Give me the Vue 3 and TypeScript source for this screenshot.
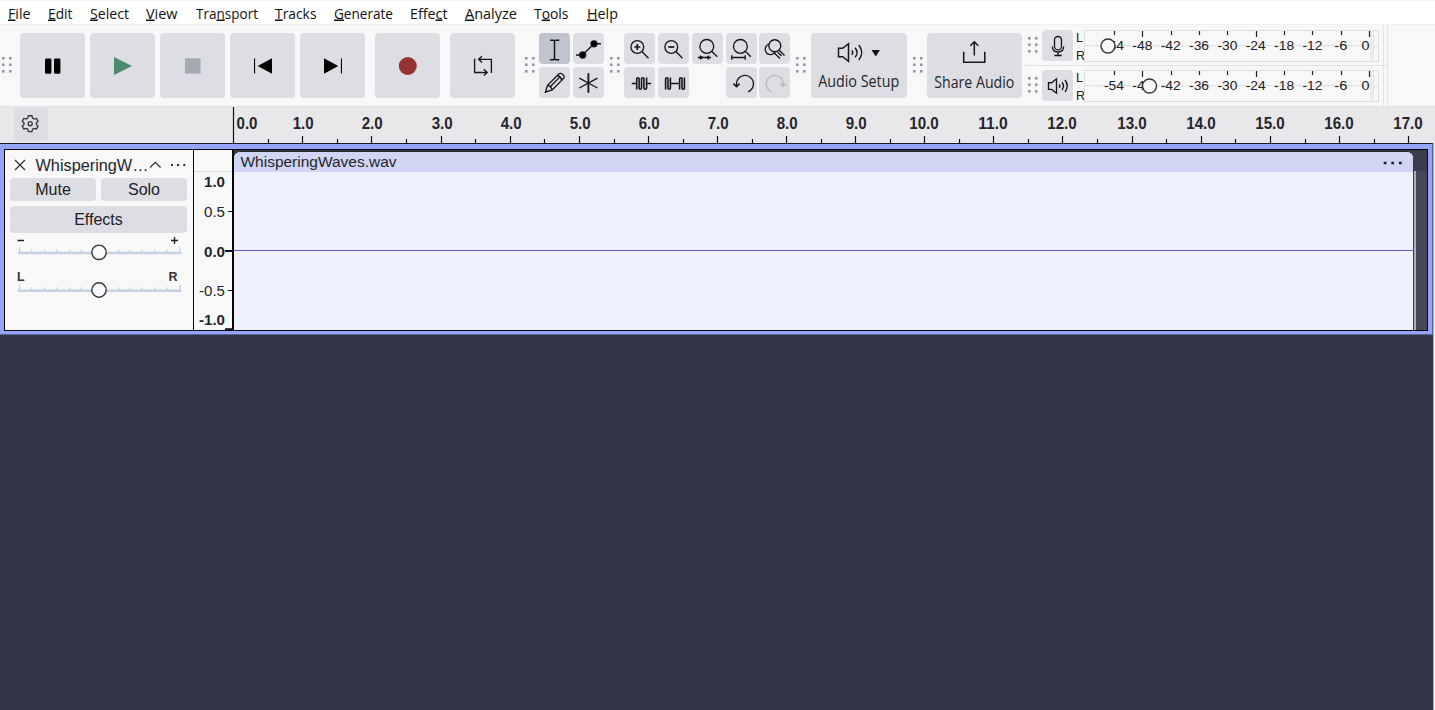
<script setup lang="ts">
interface MenuItem { pre: string; key: string; post: string; width: number; text: number }

const menu: MenuItem[] = [
  { pre: '', key: 'F', post: 'ile', width: 40, text: 22.5 },
  { pre: '', key: 'E', post: 'dit', width: 42, text: 24.5 },
  { pre: '', key: 'S', post: 'elect', width: 56, text: 39 },
  { pre: '', key: 'V', post: 'iew', width: 50, text: 31.5 },
  { pre: 'Tra', key: 'n', post: 'sport', width: 79, text: 62 },
  { pre: '', key: 'T', post: 'racks', width: 59, text: 41.5 },
  { pre: '', key: 'G', post: 'enerate', width: 76, text: 59 },
  { pre: 'Effe', key: 'c', post: 't', width: 55, text: 37.5 },
  { pre: '', key: 'A', post: 'nalyze', width: 69, text: 52 },
  { pre: 'T', key: 'o', post: 'ols', width: 52.5, text: 34.5 },
  { pre: '', key: 'H', post: 'elp', width: 50, text: 31 },
]

const seconds = Array.from({ length: 18 }, (_, i) => ({
  label: i.toFixed(1),
  x: Math.round(233.2 + i * 69.1),
}))
const halves = Array.from({ length: 17 }, (_, i) => Math.round(233.2 + i * 69.1 + 34.8))

const levels = [-54, -48, -42, -36, -30, -24, -18, -12, -6, 0].map((v, i) => ({
  label: String(v),
  tick: v === 0 ? 286 : 31 + i * 28.35,
  x: v === 0 ? 281.5 : 30 + i * 28.35,
  width: v === 0 ? 8 : v === -6 ? 13 : 20,
  tall: v % 24 === 0,
}))

const meters = [
  { name: 'record', knob: 24 },
  { name: 'playback', knob: 65.5 },
]

const gripDots = [0, 1, 2].flatMap((r) => [0, 1].map((c) => ({ x: c * 7, y: r * 6.5 })))
const sliderTicks = [12, 25, 37, 50, 61.5, 99, 110, 122, 135, 147.5]
</script>

<template>
  <div class="app">
    <nav class="menu">
      <svg v-for="m in menu" :key="m.key + m.post" class="menu-item" :width="m.width" height="24">
        <text x="0" y="17.5" :textLength="m.text" lengthAdjust="spacingAndGlyphs">{{ m.pre }}<tspan class="key">{{ m.key }}</tspan>{{ m.post }}</text>
      </svg>
    </nav>

    <header class="toolbar">
      <svg class="grip g1" width="10" height="16"><rect v-for="(d, i) in gripDots" :key="i" :x="d.x" :y="d.y" width="2.6" height="2.6" /></svg>
      <div class="transport">
        <button class="big"><svg width="65" height="65"><rect x="25" y="25.5" width="6.4" height="15.3" rx="1.3" /><rect x="34" y="25.5" width="6.4" height="15.3" rx="1.3" /></svg></button>
        <button class="big"><svg width="65" height="65"><path class="green" d="M24 24L42 33L24 42Z" /></svg></button>
        <button class="big"><svg width="65" height="65"><rect class="gray" x="25" y="25.3" width="15.6" height="15.3" /></svg></button>
        <button class="big"><svg width="65" height="65"><path d="M24 25.5h1.1v15H24ZM27.7 33L42 25.3V40.7Z" /></svg></button>
        <button class="big"><svg width="65" height="65"><path d="M24 25.3L38.3 33L24 40.7ZM40.9 25.5H42v15h-1.1Z" /></svg></button>
        <button class="big gap"><svg width="65" height="65"><circle class="red" cx="32.8" cy="33" r="9" /></svg></button>
        <button class="big gap"><svg class="line" width="65" height="65"><path d="M24.6 25.8V39.5H37M33.8 36.3L37.2 39.5L33.8 42.6M28.7 26.3H41.4V40M32 23.2L28.6 26.3L32 29.5" /></svg></button>
      </div>

      <svg class="grip g2" width="10" height="16"><rect v-for="(d, i) in gripDots" :key="i" :x="d.x" :y="d.y" width="2.6" height="2.6" /></svg>
      <div class="tools">
        <button class="small selected"><svg class="line" width="31" height="31"><path d="M11 7.2h3.3l1.2.7l1.2-.7H20.3M15.5 7.9V26M11 26.7h3.3l1.2-.7l1.2.7H20.3" stroke-width="1.5" /></svg></button>
        <button class="small"><svg class="line" width="31" height="31"><path d="M3 22h6.5L21 10.7h7" /><circle class="solid" cx="9.7" cy="22" r="3" /><circle class="solid" cx="21" cy="10.8" r="3" /></svg></button>
        <button class="small"><svg class="line" width="31" height="31"><path d="M6.4 25.2L8.6 18.3L19.5 7.3Q21.7 5.3 24 7.7T24 12L13.2 22.9ZM8.6 18.3Q12 18.8 13.2 22.9M10.7 20.3L20.5 10.4M18.3 8.5Q21.8 9.4 22.8 13.2" /></svg></button>
        <button class="small"><svg class="line" width="31" height="31"><path d="M15.4 6.2V25.8" stroke-width="1.9" /><path d="M6.3 11.2L24.5 21M24.5 11.2L6.3 21" stroke-width="1.4" /></svg></button>
      </div>

      <svg class="grip g3" width="10" height="16"><rect v-for="(d, i) in gripDots" :key="i" :x="d.x" :y="d.y" width="2.6" height="2.6" /></svg>
      <div class="edit">
        <button class="small"><svg class="line" width="31" height="31"><circle cx="13.3" cy="14" r="6.4" /><path d="M17.9 18.6L24.5 25.2" /><path d="M10.3 14h6M13.3 11v6" stroke-width="1.7" /></svg></button>
        <button class="small"><svg class="line" width="31" height="31"><circle cx="13.3" cy="14" r="6.4" /><path d="M17.9 18.6L24.5 25.2" /><path d="M10.3 14h6" stroke-width="1.7" /></svg></button>
        <button class="small"><svg class="line" width="31" height="31"><circle cx="14.8" cy="13.4" r="6.9" /><path d="M19.7 18.3L25.3 23.8M5.8 24.5H19" /><path class="solid" d="M8 22.6L11.2 24.5L8 26.4ZM17 22.6L13.8 24.5L17 26.4Z" stroke-width=".5" /></svg></button>
        <button class="small"><svg class="line" width="31" height="31"><circle cx="14.4" cy="13.4" r="6.9" /><path d="M19.3 18.3L24.8 23.8M5.8 24.5H19.2M5.8 22.2v4.6M19.2 22.2v4.6" /></svg></button>
        <button class="small"><svg class="line" width="31" height="31"><circle cx="15.8" cy="12.7" r="6" /><path d="M10 11.2A5.3 5.3 0 1 0 16.2 18.6M20 17L25.5 22.5M14.8 19.6L21 25.6M18.8 19.3L22.6 22.9" /></svg></button>
        <button class="small"><svg class="line" width="31" height="31"><path d="M7.7 16.5H12.7M12.7 22.4V11.8Q12.7 10.7 13.9 10.7T15.1 11.8V21Q15.1 22.3 16.3 22.3T17.5 21V11.8Q17.5 10.7 18.7 10.7T19.9 11.8V21Q19.9 22.3 21.1 22.3T22.6 21V10.6M22.6 16.5H27.2" stroke-width="1.6" /></svg></button>
        <button class="small"><svg class="line" width="31" height="31"><path d="M7.6 22.4V11.8Q7.6 10.7 8.8 10.7T10 11.8V21Q10 22.3 11.2 22.3T12.4 21V10.6M12.4 16.5H21.6M21.6 22.4V11.8Q21.6 10.7 22.8 10.7T24 11.8V21Q24 22.3 25.2 22.3T26.4 21V10.6" stroke-width="1.6" /></svg></button>
        <span></span>
        <button class="small"><svg class="line" width="31" height="31"><path d="M10.5 19.2V16.6A8.5 8.5 0 1 1 22 24.8" /><path d="M7.4 16.6L10.5 19.6L13.6 16.6" stroke-width="1.6" /></svg></button>
        <button class="small"><svg class="line faded" width="31" height="31"><path d="M24.2 19.2V16.6A8.5 8.5 0 1 0 12.7 24.8M21.1 16.6L24.2 19.6L27.3 16.6" /></svg></button>
      </div>

      <svg class="grip g4" width="10" height="16"><rect v-for="(d, i) in gripDots" :key="i" :x="d.x" :y="d.y" width="2.6" height="2.6" /></svg>
      <button class="wide setup">
        <svg class="line" width="96" height="65">
          <path d="M27.5 15.3V23.7H31.7L37.5 28.3V10.7L31.7 15.3ZM40.7 17.5Q42.9 19.5 40.7 21.7M44.1 14.8Q48 19.5 44.1 24.3M47.8 12Q53.8 19.5 47.8 27" stroke-width="1.5" />
          <path class="solid" d="M61.7 17.6h6L64.7 22.3Z" />
          <text x="7.2" y="53.5" textLength="81" lengthAdjust="spacingAndGlyphs">Audio Setup</text>
        </svg>
      </button>
      <svg class="grip g5" width="10" height="16"><rect v-for="(d, i) in gripDots" :key="i" :x="d.x" :y="d.y" width="2.6" height="2.6" /></svg>
      <button class="wide share">
        <svg class="line" width="95" height="65">
          <path d="M36.7 18.7V29.2H57.8V18.7M47.3 22.5V8.8M43.3 12.8L47.3 8.8L51.3 12.8" stroke-width="1.5" />
          <text x="7.3" y="54.5" textLength="80" lengthAdjust="spacingAndGlyphs">Share Audio</text>
        </svg>
      </button>

      <div class="meters">
        <div v-for="(m, mi) in meters" :key="m.name" class="meter">
          <svg class="grip" width="10" height="16"><rect v-for="(d, i) in gripDots" :key="i" :x="d.x" :y="d.y" width="2.6" height="2.6" /></svg>
          <button class="small">
            <svg v-if="mi === 0" class="line" width="31" height="31"><rect x="12.5" y="6.5" width="7" height="13.4" rx="3.5" /><path d="M10.4 16.5Q10.4 22 16 22T21.6 16.5M16 22v3.3M12.3 25.5h7.5" /></svg>
            <svg v-else class="line" width="31" height="31"><path d="M6.5 12.7V19.4H9.7L14.5 23.2V8.8L9.7 12.7ZM17.2 14.5Q18.7 16 17.2 17.7M20 12.3Q23 16 20 20M23 10Q27.5 16 23 22" /></svg>
          </button>
          <svg class="channels" width="11" height="32"><text x="1" y="12">L</text><text x="1" y="29.5">R</text></svg>
          <svg class="scale" width="296" height="32">
            <rect class="frame" x=".5" y=".5" width="286.5" height="31" />
            <path class="frame" d="M0 15.7H287M289.2.5H294.5V31.5H289.2ZM289 16.2h5.5" />
            <g v-for="l in levels" :key="l.label">
              <path class="tick" :d="`M${Math.round(l.tick) - 0.5} 1v${l.tall ? 6 : 4}`" />
              <text :x="l.x" y="19.7" text-anchor="middle" :textLength="l.width" lengthAdjust="spacingAndGlyphs">{{ l.label }}</text>
            </g>
            <circle class="knob" :cx="m.knob" cy="16" r="7" />
          </svg>
        </div>
      </div>
      <div class="dock-edge"></div>
    </header>

    <div class="timeline">
      <svg width="1435" height="36">
        <rect class="option" x="14" y="0.5" width="34" height="33.5" rx="4" />
        <g class="gear" transform="translate(30.2 16.7) scale(.88) translate(-30.2 -17.8)">
          <path d="M28.2 9.5h3.9l.8 2.7l1.7 1l2.7-.7l1.8 3.2l-1.9 2v1.6l1.9 2l-1.8 3.2l-2.7-.7l-1.7 1l-.8 2.7h-3.9l-.8-2.7l-1.7-1l-2.7.7l-1.8-3.2l1.9-2v-1.6l-1.9-2l1.8-3.2l2.7.7l1.7-1Z" transform="translate(0 -.7)" />
          <circle cx="30.2" cy="17.8" r="2.3" />
        </g>
        <path class="mark" d="M233.5 0V36" />
        <g v-for="(s, i) in seconds" :key="s.label">
          <path v-if="i" class="mark" :d="`M${s.x + 0.5} 29v7`" />
          <text :x="i ? s.x + (i > 9 ? 0 : 1.2) : 247" y="21.7" text-anchor="middle" :textLength="i > 9 ? 29.5 : 21" lengthAdjust="spacingAndGlyphs">{{ s.label }}</text>
        </g>
        <path v-for="h in halves" :key="h" class="mark" :d="`M${h + 0.5} 32v4`" />
      </svg>
    </div>

    <main class="workspace">
      <section class="track">
        <div class="panel">
          <div class="title">
            <svg width="188" height="28">
              <path class="icon" d="M10 10L20 20M20 10L10 20M145 17.5L150.3 12.3L155.6 17.5" />
              <text x="30.5" y="20.7" textLength="113" lengthAdjust="spacingAndGlyphs">WhisperingW…</text>
              <path class="dots" d="M166 15h2M172 15h2M178.3 15h2" />
            </svg>
          </div>
          <div class="pair"><button>Mute</button><button>Solo</button></div>
          <button class="effects">Effects</button>
          <svg class="sliders" width="188" height="80">
            <g v-for="(y, k) in [20, 57.7]" :key="k">
              <path class="rail" :d="`M13 ${y}H176.5`" />
              <path class="notch" :d="`M14.5 ${y}v-6M175 ${y}v-6`" />
              <path v-for="t in sliderTicks" :key="t" class="notch" :d="`M${14.7 + t} ${y}v-3.5`" />
              <circle class="knob" cx="94" :cy="y - 0.7" r="7.2" />
            </g>
            <path class="sign" d="M12.5 7.5h6.5M166 7.5h7M169.5 4v7" />
            <text x="12" y="48">L</text><text x="163.5" y="48">R</text>
          </svg>
        </div>
        <div class="amplitude">
          <svg width="39" height="180">
            <path class="divider" d="M0 21.5H38" />
            <g class="strong">
              <text x="31" y="36.8" text-anchor="end" textLength="21" lengthAdjust="spacingAndGlyphs">1.0</text>
              <text x="31" y="106.8" text-anchor="end" textLength="21" lengthAdjust="spacingAndGlyphs">0.0</text>
              <text x="31" y="174.5" text-anchor="end" textLength="26" lengthAdjust="spacingAndGlyphs">-1.0</text>
            </g>
            <text x="31" y="66.8" text-anchor="end" textLength="21" lengthAdjust="spacingAndGlyphs">0.5</text>
            <text x="31" y="145.8" text-anchor="end" textLength="26" lengthAdjust="spacingAndGlyphs">-0.5</text>
            <path class="scale-mark" d="M34 61.5h4M34 140.5h4" />
            <path class="scale-mark heavy" d="M31 101H38M31 179.2H38" />
          </svg>
        </div>
        <div class="lane">
          <div class="clip">
            <div class="clip-head"><svg width="1180" height="19"><text x="6.5" y="14.7" textLength="156" lengthAdjust="spacingAndGlyphs">WhisperingWaves.wav</text><path d="M1149.7 11h2.8M1157.3 11h2.8M1164.9 11h2.8" /></svg></div>
            <div class="clip-body"><i class="wave"></i></div>
          </div>
          <div class="tail"></div>
        </div>
      </section>
    </main>
  </div>
</template>

<style>
html, body { margin: 0; overflow: hidden; }
</style>

<style scoped>
* { box-sizing: border-box; }
.app { width: 1435px; height: 710px; overflow: hidden; background: #f8f8f8; font-family: "Liberation Sans", Arial, sans-serif; color: #202027; }
svg { display: block; flex: none; overflow: visible; }
button { display: block; padding: 0; border: 0; border-radius: 4px; background: #dddee3; font: inherit; color: inherit; }
.menu { display: flex; height: 25px; padding-left: 8px; background: #fff; border-top: 1px solid #efefef; border-bottom: 1px solid #f1f1f1; }
.menu-item text { font: 15px "Open Sans", "Noto Sans", sans-serif; fill: #111; }
.key { text-decoration: underline; }
.toolbar { display: flex; height: 82px; padding: 8px 0 0 3px; background: #f8f8f8; border-bottom: 1px solid #e3e3e7; }
.grip { fill: #9696a8; margin-top: 24px; }
.g1 { margin-left: -1px; }
.transport { display: flex; gap: 5px; margin-left: 8.4px; }
.big { width: 65px; height: 65px; }
.gap { margin-left: 5px; }
.green { fill: #4b8a6c; }
.gray { fill: #a5a9b2; }
.red { fill: #963232; }
.line { fill: none; stroke: #17171b; stroke-width: 1.35; }
.solid { fill: #000; }
.faded { stroke: #b6b8bd; }
.g2 { margin-left: 9.6px; }
.tools { display: grid; grid-template: 31px 31px / 31px 31px; gap: 3px; margin-left: 4px; }
.small { width: 31px; height: 31px; }
.selected { background: #c1c3cf; }
.g3 { margin-left: 6px; }
.edit { display: grid; grid-template: 31px 31px / repeat(5, 31px); gap: 3px 2.8px; margin-left: 4.3px; }
.g4 { margin-left: 6px; }
.wide { height: 65px; }
.wide text { font: 15.5px "Open Sans", "Noto Sans", sans-serif; fill: #25252b; stroke: none; }
.setup { width: 96px; margin-left: 4.4px; }
.g5 { margin-left: 6px; }
.share { width: 95px; margin-left: 4.3px; }
.meters { width: 358px; margin: -8px 0 0 3px; }
.meter { display: flex; width: 362px; height: 41px; padding: 5px 0 0 3px; border-bottom: 1px solid #e2e2e6; }
.meter + .meter { height: 40px; padding-top: 4px; border: 0; }
.meter .grip { margin-top: 7px; }
.meter .small { margin-left: 4px; }
.channels { margin-left: 2px; font-size: 12.5px; fill: #222; }
.scale { margin-left: -2px; font-size: 13.3px; fill: #202024; }
.frame { fill: none; stroke: #dedee2; }
.tick { stroke: #222; stroke-width: 1.2; }
.knob { fill: #f8f8f8; stroke: #38383e; stroke-width: 1.4; }
.dock-edge { width: 5px; margin-top: -8px; border: solid #e3e3e6; border-width: 0 1px; }
.timeline { height: 36px; background: #e8e8ea; font-size: 16px; font-weight: bold; }
.timeline text { fill: #25252d; }
.option { fill: #dddee3; }
.gear { fill: none; stroke: #333338; stroke-width: 1.5; }
.mark { stroke: #111; stroke-width: 1.2; }
.workspace { width: 1434px; height: 567px; background: #333647; border-right: 1px solid #a8a9b1; }
.track { display: flex; width: 1433px; height: 192px; padding: 5px 4px 4px 4px; background: #96a4f8; border-style: solid; border-width: 1px 1px 1px 0; border-color: #181822 #5c649b #5c649b; }
.panel { width: 190px; height: 182px; padding: 0 5px; background: #f8f8f8; border: 1px solid #08080c; }
.title { width: 188px; height: 28px; margin-left: -5px; font-size: 16.5px; }
.title text { fill: #25252d; }
.icon { fill: none; stroke: #333; stroke-width: 1.25; }
.dots { stroke: #333; stroke-width: 2; }
.pair { display: flex; gap: 5px; height: 23px; font-size: 16px; }
.pair button { width: 86px; height: 23px; line-height: 24px; }
.effects { width: 177px; height: 27px; margin-top: 5px; font-size: 16px; line-height: 27px; }
.sliders { margin: 0 0 0 -5px; font-size: 12.5px; font-weight: bold; fill: #333; }
.rail { stroke: #c3d3e5; stroke-width: 2.4; }
.notch { stroke: #c3d0de; stroke-width: 1.2; }
.sign { stroke: #222; stroke-width: 1.4; }
.amplitude { width: 40px; height: 182px; border-top: 1px solid #08080c; border-bottom: 1px solid #08080c; border-right: 2px solid #08080c; background: #f8f8f8; font-size: 15.5px; fill: #25252d; }
.strong { font-weight: bold; }
.divider { stroke: #dedee2; }
.scale-mark { stroke: #111; stroke-width: 1.2; }
.heavy { stroke-width: 2; }
.lane { display: flex; flex: 1; height: 182px; padding-top: 1px; background: #3c3c4f; border: solid #08080c; border-width: 1px 1px 1px 0; }
.clip { width: 1180px; height: 179px; border-top: 1px solid #272735; border-right: 1px solid #363747; border-radius: 7px 7px 0 0; background: #eff1ff; }
.clip-head { height: 20px; background: #cfd5f2; border-radius: 6px 6px 0 0; font-size: 15.5px; fill: #25252d; }
.clip-head path { stroke: #202027; stroke-width: 2.4; }
.clip-body { display: flex; height: 158px; padding-top: 78px; }
.wave { display: block; width: 1182px; height: 1px; flex: none; background: #5b5fcd; }
.tail { flex: 1; height: 159px; margin-top: 20px; border-left: 2px solid #aeb0ba; background: #45475a; }
</style>
